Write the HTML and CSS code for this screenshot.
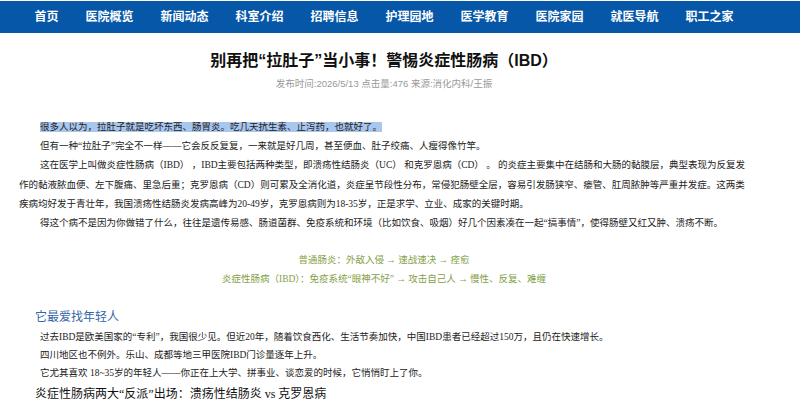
FILE: index.html
```html
<!DOCTYPE html>
<html>
<head>
    <meta charset="utf-8">
    <title>别再把“拉肚子”当小事！警惕炎症性肠病（IBD）</title>
    <link rel="stylesheet" href="styles.css">
</head>
<body>
    <nav class="topnav">
        <ul class="topnav-list">
            <li><a href="#">首页</a></li>
            <li><a href="#">医院概览</a></li>
            <li><a href="#">新闻动态</a></li>
            <li><a href="#">科室介绍</a></li>
            <li><a href="#">招聘信息</a></li>
            <li><a href="#">护理园地</a></li>
            <li><a href="#">医学教育</a></li>
            <li><a href="#">医院家园</a></li>
            <li><a href="#">就医导航</a></li>
            <li><a href="#">职工之家</a></li>
        </ul>
    </nav>

    <div class="article">
        <h1 class="article-title">别再把“拉肚子”当小事！警惕炎症性肠病（IBD）</h1>
        <div class="article-meta">发布时间:2026/5/13 点击量:476 来源:消化内科/王振</div>

        <div class="article-body">
            <p><span class="hl">很多人以为，拉肚子就是吃坏东西、肠胃炎。吃几天抗生素、止泻药，也就好了。</span></p>
            <p>但有一种“拉肚子”完全不一样——它会反反复复，一来就是好几周，甚至便血、肚子绞痛、人瘦得像竹竿。</p>
            <p>这在医学上叫做炎症性肠病（IBD） ，IBD主要包括两种类型，即溃疡性结肠炎（UC） 和克罗恩病（CD） 。 的炎症主要集中在结肠和大肠的黏膜层，典型表现为反复发作的黏液脓血便、左下腹痛、里急后重；克罗恩病（CD）则可累及全消化道，炎症呈节段性分布，常侵犯肠壁全层，容易引发肠狭窄、瘘管、肛周脓肿等严重并发症。这两类疾病均好发于青壮年，我国溃疡性结肠炎发病高峰为20-49岁，克罗恩病则为18-35岁，正是求学、立业、成家的关键时期。</p>
            <p>得这个病不是因为你做错了什么，往往是遗传易感、肠道菌群、免疫系统和环境（比如饮食、吸烟）好几个因素凑在一起“搞事情”，使得肠壁又红又肿、溃疡不断。</p>

            <div class="compare">
                <p>普通肠炎：外敌入侵 → 速战速决 → 痊愈</p>
                <p>炎症性肠病（IBD）：免疫系统“眼神不好” → 攻击自己人 → 慢性、反复、难缠</p>
            </div>

            <h3 class="section-title section-title-blue">它最爱找年轻人</h3>
            <div class="tight">
                <p>过去IBD是欧美国家的“专利”，我国很少见。但近20年，随着饮食西化、生活节奏加快，中国IBD患者已经超过150万，且仍在快速增长。</p>
                <p>四川地区也不例外。乐山、成都等地三甲医院IBD门诊量逐年上升。</p>
                <p>它尤其喜欢 18~35岁的年轻人——你正在上大学、拼事业、谈恋爱的时候，它悄悄盯上了你。</p>
            </div>

            <h3 class="section-title">炎症性肠病两大“反派”出场：溃疡性结肠炎 vs 克罗恩病</h3>
        </div>
    </div>
</body>
</html>
```

FILE: styles.css
```css
body {
    margin: 0;
    padding: 0;
    background-color: #fff;
    font-family: "Liberation Sans", "Noto Sans CJK SC", sans-serif;
}

/* top navigation */
.topnav {
    margin-top: 1px;
    height: 32px;
    background-color: #0757a8;
}
.topnav-list {
    list-style: none;
    margin: 0 0 0 19px;
    padding: 0;
    width: 730px;
    display: flex;
    justify-content: center;
    gap: 27px;
}
.topnav-list a {
    display: block;
    line-height: 32px;
    font-size: 12px;
    font-weight: bold;
    color: #fff;
    text-decoration: none;
}

/* article */
.article {
    margin-left: 19px;
    width: 730px;
}
.article-title {
    margin: 16px 0 0;
    font-size: 16px;
    line-height: 24px;
    font-weight: bold;
    color: #111;
    text-align: center;
}
.article-meta {
    margin-top: 3px;
    font-size: 9.5px;
    line-height: 16px;
    color: #999;
    text-align: center;
}

.article-body {
    margin-top: 26px;
    font-family: "Liberation Serif", "Noto Sans CJK SC", serif;
    font-size: 9.5px;
    line-height: 19.2px;
    color: #222;
}
.article-body p {
    margin: 0 -3px 0 0;
    text-indent: 21px;
    word-break: break-all;
}
.hl {
    background-color: #a9c6ee;
}

.compare {
    margin-top: 18px;
    color: #849f48;
}
.compare p {
    margin-right: 0;
    text-indent: 0;
    text-align: center;
    line-height: 19px;
}

.section-title {
    margin: 2px 0 0;
    padding-left: 16px;
    font-size: 12px;
    line-height: 20px;
    font-weight: normal;
    color: #111;
}
.section-title-blue {
    margin-top: 17.5px;
    font-family: "Liberation Sans", "Noto Sans CJK SC", sans-serif;
    color: #3566a6;
}

.tight {
    margin-top: 1px;
}
.tight p {
    line-height: 18px;
}
```
